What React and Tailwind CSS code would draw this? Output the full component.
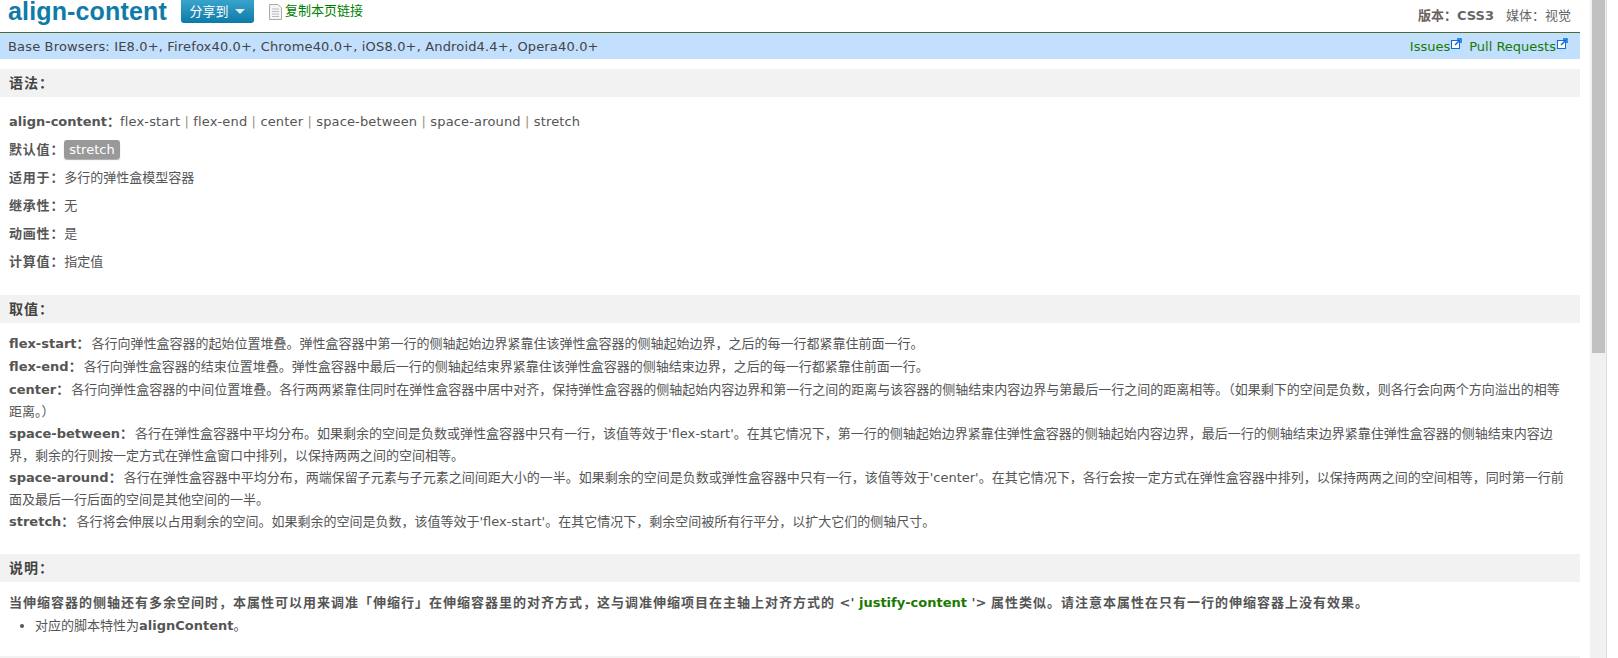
const bodyFont = { fontFamily: '"DejaVu Sans", "Noto Sans CJK SC", sans-serif' };
const titleFont = { fontFamily: '"Liberation Sans", sans-serif' };

function ExternalIcon() {
  return (
    <svg width="11" height="11" viewBox="0 0 11 11" className="mb-[7px] ml-px shrink-0">
      <rect x="0.5" y="2.5" width="8" height="8" fill="#fff" stroke="#0a6fd8" />
      <path d="M4 7 L8.5 2.5 M6 1 H10 V5" fill="none" stroke="#0a6fd8" strokeWidth="1.5" />
    </svg>
  );
}

function SectionTitle({ children }) {
  return (
    <h2 className="h-7 bg-[#f2f2f2] pl-[9px] text-[14px] leading-7 font-bold tracking-[1px] text-[#444]">{children}</h2>
  );
}

function Row({ label, children }) {
  return (
    <div className="h-7 leading-7">
      <b className="tracking-[0.8px] text-[#555]">{label}&#xFF1A;</b>{children}
    </div>
  );
}

function Item({ name, gap, children }) {
  return (
    <p className={gap ? 'mb-px leading-[22px]' : 'leading-[22px]'}>
      <b className="mr-[2px] text-[#555]">{name}&#xFF1A;</b>{children}
    </p>
  );
}

function Sep() {
  return <span className="text-[#a08f7c]">|</span>;
}

export default function App() {
  return (
    <div className="h-[658px] overflow-hidden flex bg-white text-[13px] text-[#555]" style={bodyFont}>
      <main className="w-[1580px] shrink-0">
        <header className="h-[33px] flex items-start justify-between border-b border-[#4d6b2e]">
          <div className="flex items-start">
            <h1 className="ml-2 text-[25px] leading-[23px] font-bold tracking-[0.15px] text-[#0f7ba8]" style={titleFont}>align-content</h1>
            <button className="ml-[14px] h-[23px] w-[73px] rounded-b-[3px] bg-gradient-to-b from-[#38a3cb] to-[#0a7aa8] text-[13px] text-white flex items-center justify-center gap-[7px]">
              分享到
              <span className="border-x-[5px] border-t-[5px] border-x-transparent border-t-[#dfeef5]" />
            </button>
            <a className="ml-[15px] flex items-center text-[13px] leading-[22px] text-[#008000]">
              <svg width="13" height="16" viewBox="0 0 13 16" className="mr-[3px] mt-px">
                <path d="M.5.5H9L12.5 4V15.500H.5Z" fill="#f6f6f6" stroke="#aaa" />
                <path d="M3 5H10M3 7.500H10M3 10H10M3 12.500H10" stroke="#bbb" />
              </svg>
              复制本页链接
            </a>
          </div>
          <div className="mt-[9px] mr-[9px] leading-[14px] text-[#666]">
            <b className="text-[#6b6060]">版本&#xFF1A;</b><b className="mr-3 text-[#666]">CSS3</b>媒体&#xFF1A;视觉
          </div>
        </header>

        <div className="h-[26px] flex items-center justify-between bg-[#c2dffd] pl-2 pr-3 pt-px text-[#444]">
          <span className="tracking-[0.16px]">Base Browsers: IE8.0+, Firefox40.0+, Chrome40.0+, iOS8.0+, Android4.4+, Opera40.0+</span>
          <div className="flex items-center gap-[7px] text-[#1a7a00]">
            <a className="flex items-center">Issues<ExternalIcon /></a>
            <a className="flex items-center">Pull Requests<ExternalIcon /></a>
          </div>
        </div>

        <section className="mt-[10px]">
          <SectionTitle>语法&#xFF1A;</SectionTitle>
          <div className="mt-[11px] pl-[9px]">
            <div className="h-7 leading-7">
              <b>align-content&#xFF1A;</b><span className="tracking-[0.15px]">flex-start <Sep /> flex-end <Sep /> center <Sep /> space-between <Sep /> space-around <Sep /> stretch</span>
            </div>
            <Row label="默认值">
              <span className="rounded-[3px] bg-[#999] px-[5px] py-[2px] text-white shadow-[0_1px_1px_#aaa]">stretch</span>
            </Row>
            <Row label="适用于">多行的弹性盒模型容器</Row>
            <Row label="继承性">无</Row>
            <Row label="动画性">是</Row>
            <Row label="计算值">指定值</Row>
          </div>
        </section>

        <section className="mt-[19px]">
          <SectionTitle>取值&#xFF1A;</SectionTitle>
          <div className="mt-[10px] pl-[9px] pr-[15px]">
            <Item name="flex-start" gap>各行向弹性盒容器的起始位置堆叠。弹性盒容器中第一行的侧轴起始边界紧靠住该弹性盒容器的侧轴起始边界&#xFF0C;之后的每一行都紧靠住前面一行。</Item>
            <Item name="flex-end" gap>各行向弹性盒容器的结束位置堆叠。弹性盒容器中最后一行的侧轴起结束界紧靠住该弹性盒容器的侧轴结束边界&#xFF0C;之后的每一行都紧靠住前面一行。</Item>
            <Item name="center">各行向弹性盒容器的中间位置堆叠。各行两两紧靠住同时在弹性盒容器中居中对齐&#xFF0C;保持弹性盒容器的侧轴起始内容边界和第一行之间的距离与该容器的侧轴结束内容边界与第最后一行之间的距离相等。&#xFF08;如果剩下的空间是负数&#xFF0C;则各行会向两个方向溢出的相等距离。&#xFF09;</Item>
            <Item name="space-between">各行在弹性盒容器中平均分布。如果剩余的空间是负数或弹性盒容器中只有一行&#xFF0C;该值等效于'flex-start'。在其它情况下&#xFF0C;第一行的侧轴起始边界紧靠住弹性盒容器的侧轴起始内容边界&#xFF0C;最后一行的侧轴结束边界紧靠住弹性盒容器的侧轴结束内容边界&#xFF0C;剩余的行则按一定方式在弹性盒窗口中排列&#xFF0C;以保持两两之间的空间相等。</Item>
            <Item name="space-around">各行在弹性盒容器中平均分布&#xFF0C;两端保留子元素与子元素之间间距大小的一半。如果剩余的空间是负数或弹性盒容器中只有一行&#xFF0C;该值等效于'center'。在其它情况下&#xFF0C;各行会按一定方式在弹性盒容器中排列&#xFF0C;以保持两两之间的空间相等&#xFF0C;同时第一行前面及最后一行后面的空间是其他空间的一半。</Item>
            <Item name="stretch">各行将会伸展以占用剩余的空间。如果剩余的空间是负数&#xFF0C;该值等效于'flex-start'。在其它情况下&#xFF0C;剩余空间被所有行平分&#xFF0C;以扩大它们的侧轴尺寸。</Item>
          </div>
        </section>

        <section className="mt-[21px]">
          <SectionTitle>说明&#xFF1A;</SectionTitle>
          <div className="mt-[10px] pl-[9px]">
            <p className="leading-[22px] font-bold">
              <span className="tracking-[1px]">当伸缩容器的侧轴还有多余空间时&#xFF0C;本属性可以用来调准「伸缩行」在伸缩容器里的对齐方式&#xFF0C;这与调准伸缩项目在主轴上对齐方式的</span> &lt;' <a className="text-[#1a7a00]">justify-content</a> '&gt; <span className="tracking-[1px]">属性类似。请注意本属性在只有一行的伸缩容器上没有效果。</span>
            </p>
            <ul className="mt-px list-disc pl-[26px] leading-[22px]">
              <li>对应的脚本特性为<b>alignContent</b>。</li>
            </ul>
          </div>
        </section>

        <div className="mt-[19px] h-7 bg-[#f2f2f2]" />
      </main>

      <div className="ml-[10px] w-[17px] border-r border-[#ddd] bg-[#f1f1f1] px-[2px]">
        <div className="h-[353px] w-[13px] bg-[#c1c1c1]" />
      </div>
    </div>
  );
}
